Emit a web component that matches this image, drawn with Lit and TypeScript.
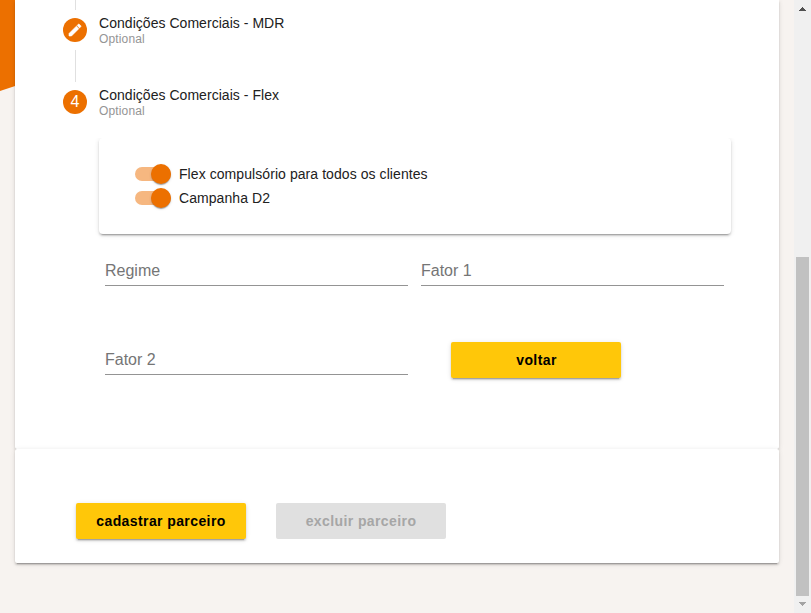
import { LitElement, html, css, svg } from "lit";
import { customElement, property } from "lit/decorators.js";

const elevation = css`0 3px 1px -2px rgba(0, 0, 0, 0.2), 0 2px 2px 0 rgba(0, 0, 0, 0.14), 0 1px 5px 0 rgba(0, 0, 0, 0.12)`;

@customElement("step-header")
class StepHeader extends LitElement {
  @property() label = "";
  @property() index = "";

  static styles = css`
    :host {
      display: flex;
      align-items: center;
      height: 72px;
      gap: 12px;
    }
    .icon {
      width: 24px;
      height: 24px;
      border-radius: 50%;
      background: #ec7000;
      color: #fff;
      display: flex;
      align-items: center;
      justify-content: center;
      font-size: 16px;
      line-height: 24px;
    }
    .text {
      display: flex;
      flex-direction: column;
    }
    .label {
      font-size: 14px;
      line-height: 16px;
      color: #212121;
      letter-spacing: 0.04px;
    }
    .optional {
      font-size: 12px;
      line-height: 14px;
      padding-top: 1px;
      margin-bottom: -1px;
      color: #959595;
      letter-spacing: 0.15px;
    }
  `;

  render() {
    const pencil = svg`<path fill="#fff" stroke="#fff" stroke-width="0.9" d="M3 17.25V21h3.75L17.81 9.94l-3.75-3.75L3 17.25zM20.71 7.04a1 1 0 0 0 0-1.41l-2.34-2.34a1 1 0 0 0-1.41 0l-1.83 1.83 3.75 3.75 1.83-1.83z"/>`;
    return html`
      <div class="icon">
        ${this.index
          ? this.index
          : html`<svg width="16" height="16" viewBox="0 0 24 24">${pencil}</svg>`}
      </div>
      <div class="text">
        <span class="label">${this.label}</span>
        <span class="optional">Optional</span>
      </div>
    `;
  }
}

@customElement("slide-toggle")
class SlideToggle extends LitElement {
  static styles = css`
    :host {
      display: flex;
      align-items: center;
      height: 24px;
      gap: 8px;
      font-size: 14px;
      color: #212121;
      letter-spacing: 0.07px;
    }
    .bar {
      width: 36px;
      height: 14px;
      border-radius: 8px;
      background: #f6b780;
      display: flex;
      align-items: center;
      justify-content: flex-end;
    }
    .thumb {
      flex: none;
      width: 20px;
      height: 20px;
      border-radius: 50%;
      background: #ec7000;
      box-shadow: 0 2px 1px -1px rgba(0, 0, 0, 0.2), 0 1px 1px 0 rgba(0, 0, 0, 0.14),
        0 1px 3px 0 rgba(0, 0, 0, 0.12);
    }
  `;

  render() {
    return html`<div class="bar"><div class="thumb"></div></div><span><slot></slot></span>`;
  }
}

@customElement("app-root")
class AppRoot extends LitElement {
  static styles = css`
    * {
      box-sizing: border-box;
    }
    :host {
      display: flex;
      height: 613px;
      overflow: hidden;
      background: #f7f3f0;
      font-family: "Liberation Sans", Arial, sans-serif;
    }
    .page {
      flex: 1;
      position: relative;
      padding: 0 15px;
    }
    .banner {
      position: absolute;
      left: 0;
      top: 0;
      width: 100px;
      height: 91px;
      background: #ec7000;
      clip-path: polygon(0 0, 100% 0, 100% 58px, 0 100%);
    }
    .card {
      position: relative;
      background: #fff;
      border-radius: 4px;
      box-shadow: ${elevation};
    }
    .form {
      height: 449px;
      border-radius: 0 0 2px 2px;
      padding: 0 48px;
    }
    .connector {
      width: 1px;
      margin-left: 12px;
      background: #e0e0e0;
    }
    .head {
      height: 10px;
    }
    .between {
      height: 32px;
      margin: -16px 0 -16px 12px;
    }
    .first {
      margin-top: -16px;
    }
    .content {
      margin-left: 36px;
      width: 632px;
      clip-path: inset(0 -10px -10px -10px);
    }
    .toggles {
      height: 96px;
      padding: 24px 36px;
    }
    .fields {
      display: grid;
      grid-template-columns: 303px 303px;
      column-gap: 13px;
      row-gap: 53px;
      padding: 16px 6px 0;
    }
    .field {
      height: 36px;
      border-bottom: 1px solid #949494;
      padding-top: 12px;
      font-size: 16px;
      line-height: 18px;
      color: #757575;
    }
    .button {
      width: 170px;
      height: 36px;
      border: 0;
      border-radius: 2px;
      padding: 0;
      background: #ffc709;
      color: #000;
      font: bold 14px/36px "Liberation Sans", Arial, sans-serif;
      letter-spacing: 0.4px;
      text-align: center;
      box-shadow: ${elevation};
    }
    .back {
      margin: 3px 0 0 30px;
      padding-left: 1px;
    }
    .disabled {
      background: #e0e0e0;
      color: #a6a6a6;
      box-shadow: none;
    }
    .actions {
      height: 114px;
      border-radius: 2px;
      padding: 54px 61px 0;
      display: flex;
      gap: 30px;
    }
    .scrollbar {
      width: 17px;
      background: #f0f0f0;
      display: flex;
      flex-direction: column;
      align-items: center;
    }
    .arrow {
      width: 17px;
      height: 17px;
      flex: none;
    }
    .handle {
      width: 13px;
      height: 339px;
      margin-top: 240px;
      background: #c1c1c1;
    }
  `;

  render() {
    return html`
      <div class="page">
        <div class="banner"></div>
        <div class="card form">
          <div class="connector head"></div>
          <step-header class="first" label="Condições Comerciais - MDR"></step-header>
          <div class="connector between"></div>
          <step-header label="Condições Comerciais - Flex" index="4"></step-header>
          <div class="content">
            <div class="card toggles">
              <slide-toggle>Flex compulsório para todos os clientes</slide-toggle>
              <slide-toggle>Campanha D2</slide-toggle>
            </div>
            <div class="fields">
              <div class="field">Regime</div>
              <div class="field">Fator 1</div>
              <div class="field">Fator 2</div>
              <button class="button back">voltar</button>
            </div>
          </div>
        </div>
        <div class="card actions">
          <button class="button">cadastrar parceiro</button>
          <button class="button disabled" disabled>excluir parceiro</button>
        </div>
      </div>
      <div class="scrollbar">
        <svg class="arrow" viewBox="0 0 17 17" shape-rendering="crispEdges">
          <path fill="#505050" d="M8 7h1v1h1v1h1v1h1v1H5v-1h1V9h1V8h1z" />
        </svg>
        <div class="handle"></div>
        <svg class="arrow" viewBox="0 0 17 17" shape-rendering="crispEdges">
          <path fill="#a3a3a3" d="M5 6h7v1h-1v1h-1v1H9v1H8V9H7V8H6V7H5z" />
        </svg>
      </div>
    `;
  }
}
